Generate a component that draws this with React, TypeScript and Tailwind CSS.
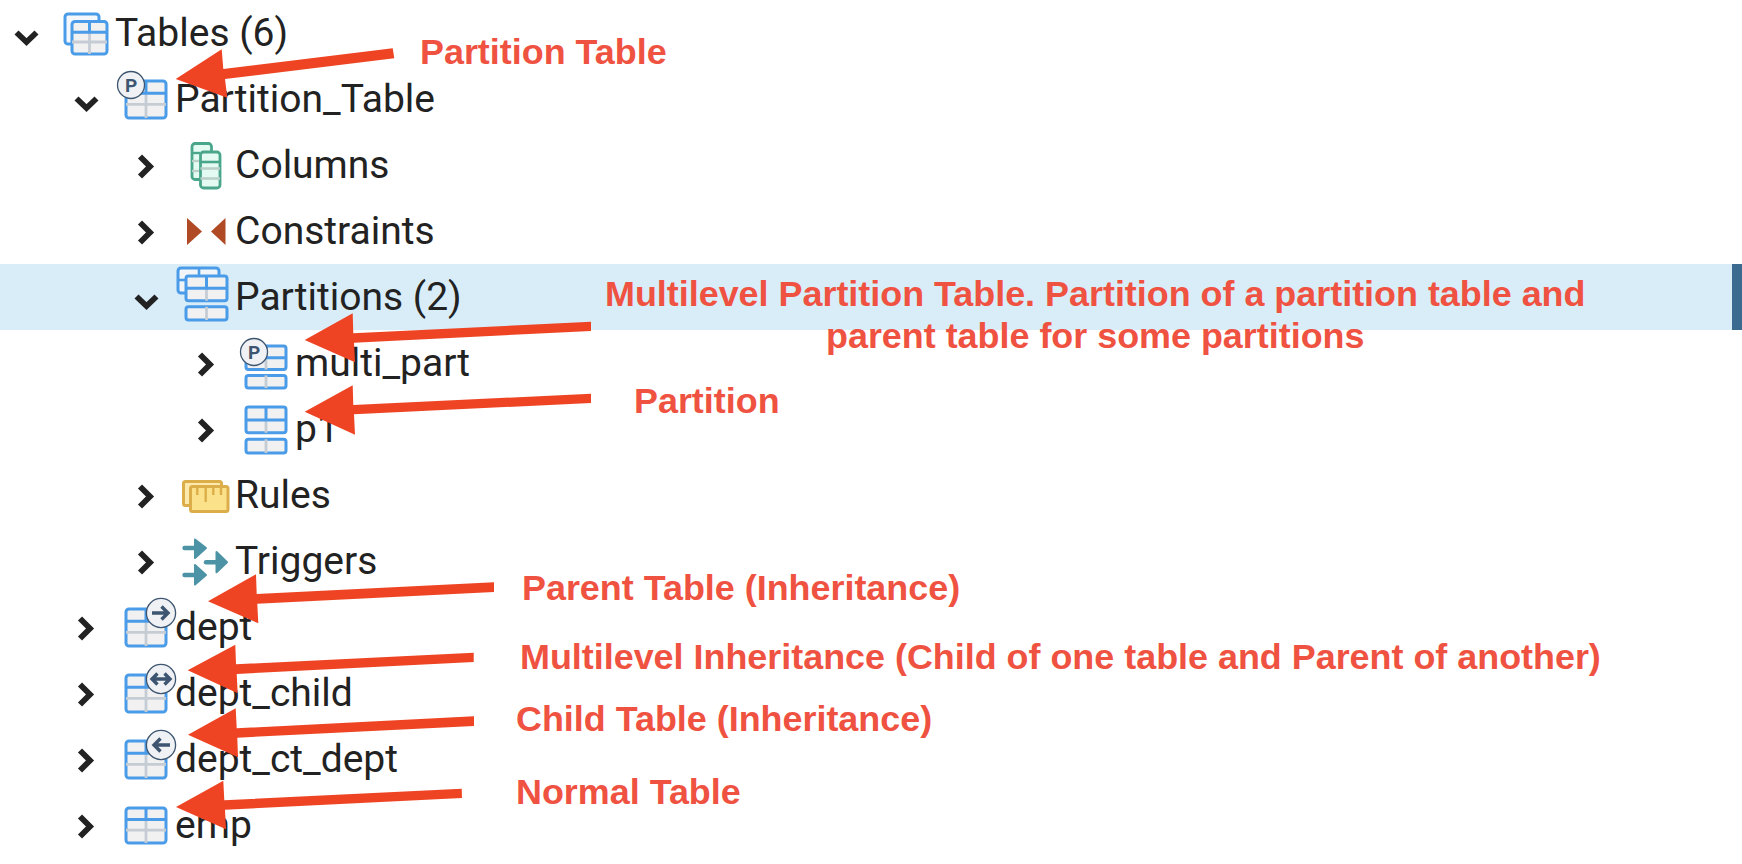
import type { ReactNode } from 'react';

const BLUE = '#4a9be8';
const GRAY = '#c5ccd4';
const SLATE = '#3d5570';

function TableIcon({ x = 14, y = 15, w = 40, h = 37 }: { x?: number; y?: number; w?: number; h?: number }) {
  const head = y + h * 0.33;
  const mid = y + h * 0.63;
  const cx = x + w / 2;
  return (
    <g>
      <rect x={x} y={y} width={w} height={h} rx={3} fill="#f1f1f2" stroke={BLUE} strokeWidth={3} />
      <line x1={x} y1={mid} x2={x + w} y2={mid} stroke={GRAY} strokeWidth={2.8} />
      <line x1={cx} y1={head} x2={cx} y2={y + h} stroke={GRAY} strokeWidth={2.8} />
      <line x1={x} y1={head} x2={x + w} y2={head} stroke={BLUE} strokeWidth={3} />
      <line x1={cx} y1={y} x2={cx} y2={head} stroke={BLUE} strokeWidth={3} />
    </g>
  );
}

function PartitionIcon({ x = 14, y = 11, w = 40, h = 46 }: { x?: number; y?: number; w?: number; h?: number }) {
  const mainH = h * 0.56;
  const cx = x + w / 2;
  const lineY = y + mainH / 2;
  const botY = y + h * 0.7;
  return (
    <g>
      <rect x={x} y={y} width={w} height={mainH} rx={2.5} fill="#f1f1f2" stroke={BLUE} strokeWidth={3} />
      <line x1={cx} y1={lineY} x2={cx} y2={y + mainH} stroke={GRAY} strokeWidth={2.8} />
      <line x1={x} y1={lineY} x2={x + w} y2={lineY} stroke={BLUE} strokeWidth={3} />
      <line x1={cx} y1={y} x2={cx} y2={lineY} stroke={BLUE} strokeWidth={3} />
      <rect x={x} y={botY} width={w} height={y + h - botY} rx={2.5} fill="#f1f1f2" stroke={BLUE} strokeWidth={3} />
      <line x1={cx} y1={botY} x2={cx} y2={y + h} stroke={GRAY} strokeWidth={2.8} />
    </g>
  );
}

function Badge({ cx, cy, r, children }: { cx: number; cy: number; r: number; children: ReactNode }) {
  return (
    <g>
      <circle cx={cx} cy={cy} r={r} fill="#eff1f4" stroke={SLATE} strokeWidth={1.3} />
      {children}
    </g>
  );
}

function PLetter({ cx, cy }: { cx: number; cy: number }) {
  return (
    <text x={cx} y={cy + 6.8} textAnchor="middle" fontFamily="Roboto, sans-serif" fontWeight={700} fontSize={19} fill={SLATE}>
      P
    </text>
  );
}

function Icon({ children }: { children: ReactNode }) {
  return (
    <svg width={64} height={66} viewBox="0 0 64 66" className="shrink-0 overflow-visible">
      {children}
    </svg>
  );
}

const tablesIcon = (
  <Icon>
    <rect x={13} y={14} width={34} height={30} rx={3} fill="#f4f8fd" stroke={BLUE} strokeWidth={3} />
    <TableIcon x={20} y={21.5} w={35} h={32.5} />
  </Icon>
);

const partitionTableIcon = (
  <Icon>
    <TableIcon />
    <Badge cx={19} cy={19} r={13.5}>
      <PLetter cx={19} cy={19} />
    </Badge>
  </Icon>
);

const columnsIcon = (
  <Icon>
    <rect x={20} y={11.5} width={19.5} height={36} rx={3} fill="#e4fbf3" stroke="#4aa68a" strokeWidth={2.8} />
    <line x1={20} y1={21} x2={28} y2={21} stroke="#4aa68a" strokeWidth={2.4} />
    <line x1={20} y1={29} x2={28} y2={29} stroke="#bcd0ca" strokeWidth={2.4} />
    <line x1={20} y1={39} x2={28} y2={39} stroke="#bcd0ca" strokeWidth={2.4} />
    <rect x={28.5} y={20} width={19.5} height={36} rx={3} fill="#e4fbf3" stroke="#4aa68a" strokeWidth={2.8} />
    <line x1={28.5} y1={30} x2={48} y2={30} stroke="#4aa68a" strokeWidth={2.6} />
    <line x1={28.5} y1={36.5} x2={48} y2={36.5} stroke="#bcd0ca" strokeWidth={2.6} />
    <line x1={28.5} y1={46.5} x2={48} y2={46.5} stroke="#bcd0ca" strokeWidth={2.6} />
  </Icon>
);

const constraintsIcon = (
  <Icon>
    <polygon points="15,20 30,33.5 15,47" fill="#b04a24" />
    <polygon points="53.5,20 39,33.5 53.5,47" fill="#b04a24" />
  </Icon>
);

const partitionsIcon = (
  <Icon>
    <rect x={6} y={4} width={41} height={25} rx={3} fill="#f1f5fa" stroke={BLUE} strokeWidth={3} />
    <line x1={6} y1={16} x2={14} y2={16} stroke={BLUE} strokeWidth={2.6} />
    <line x1={27} y1={4} x2={27} y2={12} stroke={BLUE} strokeWidth={2.6} />
    <PartitionIcon x={14} y={12} w={41} h={44} />
  </Icon>
);

const multiPartIcon = (
  <Icon>
    <PartitionIcon x={14} y={16} w={40} h={42} />
    <Badge cx={22} cy={22} r={13.5}>
      <PLetter cx={22} cy={22} />
    </Badge>
  </Icon>
);

const rulesIcon = (
  <Icon>
    <rect x={11.5} y={19.5} width={38} height={24} rx={2} fill="#fbe9ad" stroke="#dcae4a" strokeWidth={3} />
    <rect x={18.5} y={24.5} width={37.5} height={25} rx={2} fill="#fbe18a" stroke="#dcae4a" strokeWidth={3} />
    <g stroke="#dcae4a" strokeWidth={2.4}>
      <line x1={25.3} y1={24.5} x2={25.3} y2={33} />
      <line x1={33.7} y1={24.5} x2={33.7} y2={40} />
      <line x1={41.3} y1={24.5} x2={41.3} y2={33} />
      <line x1={49} y1={24.5} x2={49} y2={33} />
    </g>
  </Icon>
);

const triggersIcon = (
  <Icon>
    <g fill="#4d93a6" stroke="#4d93a6" strokeWidth={4.4} strokeLinecap="round">
      <line x1={12.5} y1={20} x2={25} y2={20} />
      <line x1={34} y1={34.3} x2={47} y2={34.3} />
      <line x1={12.5} y1={47} x2={25} y2={47} />
    </g>
    <g fill="#4d93a6" stroke="#4d93a6" strokeWidth={2} strokeLinejoin="round">
      <polygon points="23,11.5 34,20 23,30" />
      <polygon points="44.5,24 55,34.3 44.5,44.3" />
      <polygon points="23,37 34,47 23,56.5" />
    </g>
  </Icon>
);

function InheritIcon({ dir }: { dir?: 'right' | 'left' | 'both' }) {
  return (
    <Icon>
      <TableIcon x={14} y={dir ? 15 : 16} w={40} h={dir ? 37 : 35} />
      {dir && (
        <Badge cx={49} cy={19} r={14.6}>
          <g fill="none" stroke={SLATE} strokeWidth={3.4}>
            {dir === 'right' && <path d="M40 19H56M49.5 12.5L56 19L49.5 25.5" />}
            {dir === 'left' && <path d="M58 19H42M48.5 12.5L42 19L48.5 25.5" />}
            {dir === 'both' && <path d="M40 19H58M45.5 13.5L40 19L45.5 24.5M52.5 13.5L58 19L52.5 24.5" />}
          </g>
        </Badge>
      )}
    </Icon>
  );
}

function Chevron({ open }: { open: boolean }) {
  return (
    <svg width={52} height={66} viewBox="0 0 52 66" className="shrink-0">
      <path
        d={open ? 'M16.5 32.5L26.5 42L36.5 32.5' : 'M20 24.5L30 34.5L20 44.5'}
        fill="none"
        stroke="#222"
        strokeWidth={5.8}
      />
    </svg>
  );
}

type Row = { label: string; level: 0 | 1 | 2 | 3; open?: boolean; icon: ReactNode; selected?: boolean };

const rows: Row[] = [
  { label: 'Tables (6)', level: 0, open: true, icon: tablesIcon },
  { label: 'Partition_Table', level: 1, open: true, icon: partitionTableIcon },
  { label: 'Columns', level: 2, icon: columnsIcon },
  { label: 'Constraints', level: 2, icon: constraintsIcon },
  { label: 'Partitions (2)', level: 2, open: true, icon: partitionsIcon, selected: true },
  { label: 'multi_part', level: 3, icon: multiPartIcon },
  { label: 'p1', level: 3, icon: <Icon><PartitionIcon /></Icon> },
  { label: 'Rules', level: 2, icon: rulesIcon },
  { label: 'Triggers', level: 2, icon: triggersIcon },
  { label: 'dept', level: 1, icon: <InheritIcon dir="right" /> },
  { label: 'dept_child', level: 1, icon: <InheritIcon dir="both" /> },
  { label: 'dept_ct_dept', level: 1, icon: <InheritIcon dir="left" /> },
  { label: 'emp', level: 1, icon: <InheritIcon /> },
];

const indent = ['pl-0', 'pl-[60px]', 'pl-[120px]', 'pl-[180px]'];

const arrows = [
  '175.7,79 221.7,49.3 223.3,69 392.7,48.3 394.3,58.3 225,79 227.3,97.7',
  '304.7,340 352.7,313.3 353.3,333.3 591,321.7 591,331 354,342.7 355,362.3',
  '304.7,411.7 352.7,385.3 353.3,405 591,393.7 591,403 354,414.3 355,434.7',
  '208,601.3 256,574.3 256.7,594 494,582.3 494,592 257.3,603.7 258.3,623.3',
  '187.7,670.3 235.3,644.7 236,664.3 473.7,652.7 473.7,662 236.7,674 237.7,693.3',
  '188,734.7 235.7,708.3 236.7,728.3 474,716.3 474,726 237.3,737.7 238,757.3',
  '176,807 223.3,780.7 224.3,800.3 461.7,788.7 462,798 225,809.7 226,829.3',
];

const labelClass = "absolute whitespace-nowrap font-['Liberation_Sans',sans-serif] font-bold text-[35.9px] leading-[42px] text-[#ef5241]";

export default function App() {
  return (
    <div className="relative h-[864px] w-[1742px] overflow-hidden bg-white font-[Roboto,sans-serif] text-[39px] text-[#222]">
      {rows.map(row => (
        <div
          key={row.label}
          className={`flex h-[66px] items-center ${indent[row.level]} ${row.selected ? 'border-r-[10px] border-r-[#3b6a91] bg-[#d9edf9]' : ''}`}
        >
          <Chevron open={!!row.open} />
          {row.icon}
          <span className="-ml-[1px] leading-none">{row.label}</span>
        </div>
      ))}

      <svg width={1742} height={864} viewBox="0 0 1742 864" className="pointer-events-none absolute left-0 top-0">
        {arrows.map(points => (
          <polygon key={points} points={points} fill="#ee4423" />
        ))}
      </svg>

      <p className={`${labelClass} left-[420px] top-[31px]`}>Partition Table</p>
      <p className={`${labelClass} left-[605px] top-[273px] text-center`}>
        Multilevel Partition Table. Partition of a partition table and
        <br />
        parent table for some partitions
      </p>
      <p className={`${labelClass} left-[634px] top-[380px]`}>Partition</p>
      <p className={`${labelClass} left-[522px] top-[567px]`}>Parent Table (Inheritance)</p>
      <p className={`${labelClass} left-[520px] top-[636px]`}>Multilevel Inheritance (Child of one table and Parent of another)</p>
      <p className={`${labelClass} left-[516px] top-[698px]`}>Child Table (Inheritance)</p>
      <p className={`${labelClass} left-[516px] top-[771px]`}>Normal Table</p>
    </div>
  );
}
